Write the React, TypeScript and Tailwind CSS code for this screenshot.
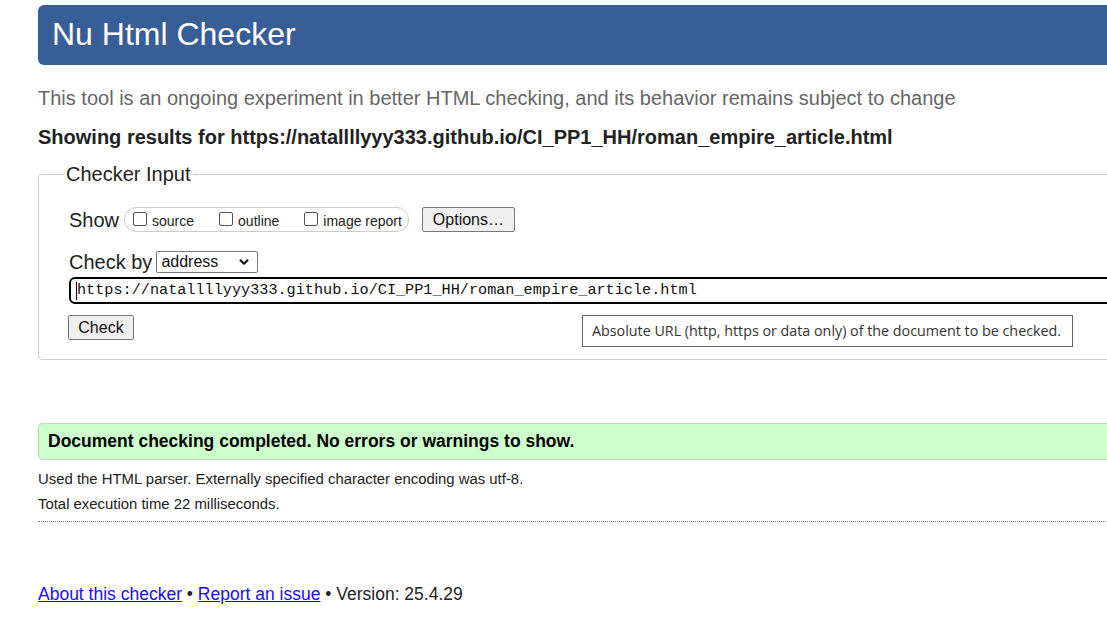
import { ChevronDown } from "lucide-react";

const url = "https://natallllyyy333.github.io/CI_PP1_HH/roman_empire_article.html";

function Box({ label }: { label: string }) {
  return (
    <label className="flex items-center gap-[5px] text-[14px] text-[#222]">
      <span className="w-[14px] h-[14px] border border-[#555] rounded-[2px] bg-white -mt-[5px]" />
      {label}
    </label>
  );
}

export default function App() {
  return (
    <div
      className="w-[1107px] h-[622px] overflow-hidden bg-white text-[#222]"
      style={{ fontFamily: "'Liberation Sans', Arial, sans-serif" }}
    >
      <div className="ml-[38px] w-[1120px] pt-[5px]">
        {/* header */}
        <div className="h-[60px] rounded-l-[6px] bg-[#375e97] flex items-center pl-[14px]">
          <h1 className="text-white text-[32px] leading-none -mt-[2px]">Nu Html Checker</h1>
        </div>

        <p className="mt-[21px] text-[20px] leading-[24px] text-[#666]">
          This tool is an ongoing experiment in better HTML checking, and its behavior remains subject to change
        </p>
        <p className="mt-[15px] text-[20px] leading-[24px] font-bold text-[#222]">
          Showing results for {url}
        </p>

        {/* checker input */}
        <fieldset className="mt-[13px] border border-[#ccc] rounded-l-[4px] h-[198px] pl-[30px]">
          <legend className="-ml-[5px] px-[2px] text-[20px] leading-[24px] text-[#222]">Checker Input</legend>

          <div className="flex items-center mt-[21px]">
            <span className="text-[20px] leading-[24px]">Show</span>
            <div className="ml-[5px] h-[25px] border border-[#ccc] rounded-[12px] flex items-center gap-[25px] pl-[8px] pr-[6px] pt-[4px]">
              <Box label="source" />
              <Box label="outline" />
              <Box label="image report" />
            </div>
            <button className="ml-[13px] h-[25px] w-[93px] border border-[#777] bg-[#efefef] rounded-[2px] text-[16px] leading-none text-[#111]">
              Options…
            </button>
          </div>

          <div className="flex items-center mt-[18px]">
            <span className="text-[20px] leading-[24px]">Check by</span>
            <div className="ml-[4px] h-[22px] w-[102px] border border-[#767676] rounded-[2px] flex items-center justify-between pl-[4px] pr-[6px] bg-white">
              <span className="text-[16px] leading-none text-[#111]">address</span>
              <ChevronDown size={14} strokeWidth={3.5} className="text-[#111]" />
            </div>
          </div>

          <div className="mt-[3px] h-[27px] border-2 border-black rounded-l-[6px] flex items-center pl-[5px]">
            <span className="w-[1px] h-[18px] bg-black" />
            <span
              className="text-[15.2px] leading-none text-[#111]"
              style={{ fontFamily: "'Liberation Mono', 'DejaVu Sans Mono', monospace" }}
            >
              {url}
            </span>
          </div>

          <div className="flex items-start mt-[11px]">
            <button className="h-[25px] w-[66px] -ml-[1px] border border-[#777] bg-[#efefef] rounded-[2px] text-[16px] leading-none text-[#111]">
              Check
            </button>
            <div
              className="ml-[448px] h-[32px] w-[491px] border border-[#666] bg-white flex items-center pl-[9px] text-[14.3px] text-[#333]"
              style={{ fontFamily: "'Open Sans', 'Noto Sans', sans-serif" }}
            >
              Absolute URL (http, https or data only) of the document to be checked.
            </div>
          </div>
        </fieldset>

        {/* results */}
        <div className="mt-[63px] h-[37px] rounded-l-[4px] border border-[#b8dcb8] bg-[#ccffcc] flex items-center pl-[9px]">
          <span className="text-[17.5px] font-bold text-black">
            Document checking completed. No errors or warnings to show.
          </span>
        </div>
        <p className="mt-[9px] text-[14.9px] leading-[20px] text-[#222]">
          Used the HTML parser. Externally specified character encoding was utf-8.
        </p>
        <p className="mt-[5px] text-[14.9px] leading-[20px] text-[#222]">Total execution time 22 milliseconds.</p>
        <div className="mt-[7px] border-t border-dotted border-[#888]" />

        <p className="mt-[62px] text-[17.5px] leading-[20px] text-[#222]">
          <a className="text-[#1a0dff] underline">About this checker</a> •{" "}
          <a className="text-[#1a0dff] underline">Report an issue</a> • Version: 25.4.29
        </p>
      </div>
    </div>
  );
}
